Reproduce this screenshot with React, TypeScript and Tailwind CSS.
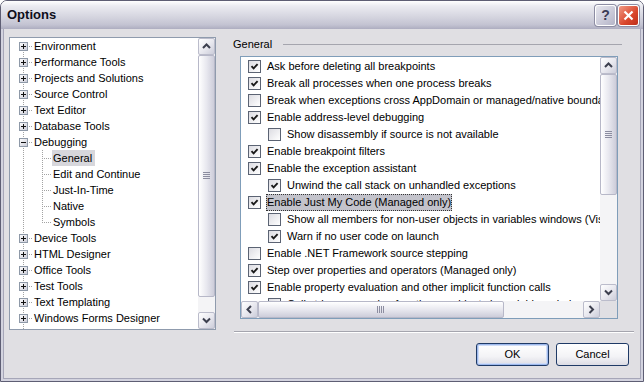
type TreeItem = { label: string; level: 0 | 1; kind: "plus" | "minus" | "leaf"; selected?: boolean; last?: boolean }

const tree: TreeItem[] = [
  { label: "Environment", level: 0, kind: "plus" },
  { label: "Performance Tools", level: 0, kind: "plus" },
  { label: "Projects and Solutions", level: 0, kind: "plus" },
  { label: "Source Control", level: 0, kind: "plus" },
  { label: "Text Editor", level: 0, kind: "plus" },
  { label: "Database Tools", level: 0, kind: "plus" },
  { label: "Debugging", level: 0, kind: "minus" },
  { label: "General", level: 1, kind: "leaf", selected: true },
  { label: "Edit and Continue", level: 1, kind: "leaf" },
  { label: "Just-In-Time", level: 1, kind: "leaf" },
  { label: "Native", level: 1, kind: "leaf" },
  { label: "Symbols", level: 1, kind: "leaf", last: true },
  { label: "Device Tools", level: 0, kind: "plus" },
  { label: "HTML Designer", level: 0, kind: "plus" },
  { label: "Office Tools", level: 0, kind: "plus" },
  { label: "Test Tools", level: 0, kind: "plus" },
  { label: "Text Templating", level: 0, kind: "plus" },
  { label: "Windows Forms Designer", level: 0, kind: "plus" },
  { label: "Workflow Designer", level: 0, kind: "plus" },
]

type Opt = { label: string; checked: boolean; indent?: boolean; selected?: boolean }

const options: Opt[] = [
  { label: "Ask before deleting all breakpoints", checked: true },
  { label: "Break all processes when one process breaks", checked: true },
  { label: "Break when exceptions cross AppDomain or managed/native boundaries", checked: false },
  { label: "Enable address-level debugging", checked: true },
  { label: "Show disassembly if source is not available", checked: false, indent: true },
  { label: "Enable breakpoint filters", checked: true },
  { label: "Enable the exception assistant", checked: true },
  { label: "Unwind the call stack on unhandled exceptions", checked: true, indent: true },
  { label: "Enable Just My Code (Managed only)", checked: true, selected: true },
  { label: "Show all members for non-user objects in variables windows (Visual Basic only)", checked: false, indent: true },
  { label: "Warn if no user code on launch", checked: true, indent: true },
  { label: "Enable .NET Framework source stepping", checked: false },
  { label: "Step over properties and operators (Managed only)", checked: true },
  { label: "Enable property evaluation and other implicit function calls", checked: true },
  { label: "Call string conversion function on objects in variables windows", checked: false, indent: true },
]

function vdots(x: number, y0: number, y1: number) {
  const r = []
  for (let y = y0; y < y1; y += 2) r.push(<rect key={`v${x}-${y}`} x={x} y={y} width={1} height={1} />)
  return r
}

function hdots(y: number, x0: number, x1: number) {
  const r = []
  for (let x = x0; x < x1; x += 2) r.push(<rect key={`h${y}-${x}`} x={x} y={y} width={1} height={1} />)
  return r
}

function TreeLines({ item, index }: { item: TreeItem; index: number }) {
  if (item.level === 1) {
    return (
      <svg width="42" height="16" shapeRendering="crispEdges" className="shrink-0">
        <g fill="#A3A3A3">
          {vdots(13, 0, 16)}
          {vdots(32, 0, item.last ? 9 : 16)}
          {hdots(8, 34, 42)}
        </g>
      </svg>
    )
  }
  const gid = `box${index}`
  return (
    <svg width="23" height="16" shapeRendering="crispEdges" className="shrink-0">
      <defs>
        <linearGradient id={gid} x1="0" y1="0" x2="1" y2="1">
          <stop offset="0" stopColor="#FFFFFF" />
          <stop offset="1" stopColor="#C9CAD6" />
        </linearGradient>
      </defs>
      <g fill="#A3A3A3">
        {index > 0 && vdots(13, 0, 4)}
        {vdots(13, 14, 16)}
        {hdots(8, 19, 23)}
      </g>
      <rect x="9.5" y="4.5" width="8" height="8" fill={`url(#${gid})`} stroke="#8E99A8" />
      <rect x="11" y="8" width="5" height="1" fill="#111" />
      {item.kind === "plus" && <rect x="13" y="6" width="1" height="5" fill="#111" />}
    </svg>
  )
}

function Arrow({ dir }: { dir: "up" | "down" | "left" | "right" }) {
  const pts = {
    up: "1,5 4.5,1.5 8,5",
    down: "1,1.5 4.5,5 8,1.5",
    left: "5,1 1.5,4.5 5,8",
    right: "1.5,1 5,4.5 1.5,8",
  }[dir]
  const vertical = dir === "up" || dir === "down"
  return (
    <svg width={vertical ? 9 : 7} height={vertical ? 7 : 9}>
      <polyline points={pts} fill="none" stroke="#3C3F4E" strokeWidth="2" />
    </svg>
  )
}

function ScrollBtn({ dir }: { dir: "up" | "down" | "left" | "right" }) {
  return (
    <div className="flex h-[17px] w-[17px] shrink-0 items-center justify-center rounded-[2px] border border-[#BBBCCB] bg-[linear-gradient(135deg,#FFFFFF,#E7E7EE_55%,#CCCDDA)]">
      <Arrow dir={dir} />
    </div>
  )
}

function Grip({ vertical }: { vertical: boolean }) {
  return vertical ? (
    <svg width="7" height="8" shapeRendering="crispEdges">
      {[0, 2, 4, 6].map((y) => (
        <rect key={y} x="0" y={y} width="7" height="1" fill="#8C8DA0" />
      ))}
    </svg>
  ) : (
    <svg width="8" height="7" shapeRendering="crispEdges">
      {[0, 2, 4, 6].map((x) => (
        <rect key={x} x={x} y="0" width="1" height="7" fill="#8C8DA0" />
      ))}
    </svg>
  )
}

function Checkbox({ checked }: { checked: boolean }) {
  return (
    <div className="flex h-[13px] w-[13px] shrink-0 items-center justify-center border border-[#5B6373] bg-[linear-gradient(135deg,#DCDCE2,#FFFFFF)]">
      {checked && (
        <svg width="9" height="9" viewBox="0 0 9 9">
          <path d="M1.5 4.2 L3.6 6.4 L7.6 2.2" fill="none" stroke="#1A1A1A" strokeWidth="1.9" />
        </svg>
      )}
    </div>
  )
}

function TitleBar() {
  return (
    <div className="flex h-[28px] items-center justify-between bg-[linear-gradient(to_bottom,#FFFFFF_0%,#EBEBF1_18%,#D6D6E0_55%,#C3C3D2_85%,#ADADC0_100%)] pl-[6px] pr-[4px]">
      <span className="text-[13px] font-bold text-[#0E0E1A]">Options</span>
      <div className="flex gap-[2px]">
        <div className="flex h-[21px] w-[21px] items-center justify-center rounded-[3px] border border-white bg-[linear-gradient(135deg,#E6E6EE,#B5B5C8)] shadow-[0_0_0_1px_#8D8DA3]">
          <span className="text-[14px] font-bold leading-none text-[#3C3C55]">?</span>
        </div>
        <div className="flex h-[21px] w-[21px] items-center justify-center rounded-[3px] border border-white bg-[linear-gradient(135deg,#F19A85,#D9462C_60%,#BE2F1A)] shadow-[0_0_0_1px_#8D8DA3]">
          <svg width="11" height="11" viewBox="0 0 11 11">
            <path d="M1.5 1.5 L9.5 9.5 M9.5 1.5 L1.5 9.5" stroke="#FFFFFF" strokeWidth="2.2" />
          </svg>
        </div>
      </div>
    </div>
  )
}

function TreePanel() {
  return (
    <div className="flex h-[293px] w-[207px] shrink-0 border border-[#8F9BAD] bg-white">
      <div className="flex-1 overflow-hidden">
        {tree.map((item, i) => (
          <div key={item.label} className="flex h-[16px] items-center whitespace-nowrap">
            <TreeLines item={item} index={i} />
            <span className={`pl-[1px] pr-[3px] leading-[16px] ${item.selected ? "bg-[#D7D7DC]" : ""}`}>{item.label}</span>
          </div>
        ))}
      </div>
      <div className="flex w-[17px] shrink-0 flex-col bg-[#F4F4F6]">
        <ScrollBtn dir="up" />
        <div className="flex h-[242px] items-center justify-center rounded-[2px] border border-[#B7B8C8] bg-[linear-gradient(to_right,#FFFFFF,#E8E8EF_50%,#CDCDDA)]">
          <Grip vertical />
        </div>
        <div className="flex-1" />
        <ScrollBtn dir="down" />
      </div>
    </div>
  )
}

function OptionList() {
  return (
    <div className="ml-[11px] mt-[5px] flex h-[263px] w-[378px] flex-col border border-[#7F9DB9] bg-white">
      <div className="flex h-[244px]">
        <div className="flex-1 overflow-hidden pt-[1px]">
          {options.map((o) => (
            <div key={o.label} className={`flex h-[17px] items-center whitespace-nowrap ${o.indent ? "pl-[27px]" : "pl-[7px]"}`}>
              <Checkbox checked={o.checked} />
              <span
                className={`ml-[5px] px-[1px] leading-[15px] ${o.selected ? "bg-[#C3C3CB] outline outline-1 outline-dotted outline-[#333] -outline-offset-1 py-[1px]" : ""}`}
              >
                {o.label}
              </span>
            </div>
          ))}
        </div>
        <div className="flex w-[17px] shrink-0 flex-col bg-[#F4F4F6]">
          <ScrollBtn dir="up" />
          <div className="flex h-[121px] items-center justify-center rounded-[2px] border border-[#B7B8C8] bg-[linear-gradient(to_right,#FFFFFF,#E8E8EF_50%,#CDCDDA)]">
            <Grip vertical />
          </div>
          <div className="flex-1" />
          <ScrollBtn dir="down" />
        </div>
      </div>
      <div className="flex h-[17px]">
        <div className="flex flex-1 bg-[#F4F4F6]">
          <ScrollBtn dir="left" />
          <div className="flex w-[246px] items-center justify-center rounded-[2px] border border-[#B7B8C8] bg-[linear-gradient(to_bottom,#FFFFFF,#E8E8EF_50%,#CDCDDA)]">
            <Grip vertical={false} />
          </div>
          <div className="flex-1" />
          <ScrollBtn dir="right" />
        </div>
        <div className="w-[17px] bg-[#E0DFE3]" />
      </div>
    </div>
  )
}

function Button({ label, primary }: { label: string; primary?: boolean }) {
  return (
    <div
      className={`flex h-[23px] w-[73px] items-center justify-center rounded-[3px] border border-[#1F3A66] bg-[linear-gradient(to_bottom,#FFFFFF,#F3F3F6_60%,#DCDCE4)] ${
        primary ? "shadow-[inset_0_0_0_1px_#9DB8EC,inset_0_0_0_2px_#CFDCF6]" : ""
      }`}
    >
      {label}
    </div>
  )
}

export default function App() {
  return (
    <div className="flex h-[382px] w-[644px] flex-col overflow-hidden rounded-t-[7px] border border-[#5E5E74] font-['Liberation_Sans',Arial,sans-serif] text-[11px] text-black">
      <TitleBar />
      <div className="flex flex-1 flex-col border-x-[2px] border-b-[2px] border-[#D3D3DF]">
        <div className="flex flex-1 flex-col border-x border-b border-[#A6A6B8] bg-[#E0DFE3] pl-[5px] pr-[11px] pt-[8px] pb-[12px]">
          <div className="flex h-[293px]">
            <TreePanel />
            <div className="ml-[13px] flex w-[400px] flex-col">
              <div className="flex h-[14px] items-center pl-[4px] pr-[7px]">
                <span className="leading-[14px]">General</span>
                <div className="ml-[11px] h-px flex-1 bg-[#A5A5AE]" />
              </div>
              <OptionList />
            </div>
          </div>
          <div className="ml-[225px] mt-[1px] h-[2px] w-[400px] border-t border-[#A5A5AE] bg-white" />
          <div className="mt-[10px] flex justify-end gap-[7px]">
            <Button label="OK" primary />
            <Button label="Cancel" />
          </div>
        </div>
      </div>
    </div>
  )
}
